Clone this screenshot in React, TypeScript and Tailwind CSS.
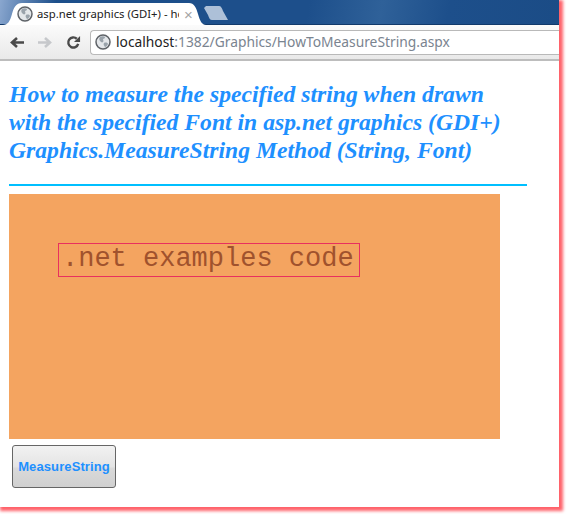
const Globe = ({ size }: { size: number }) => (
  <svg width={size} height={size} viewBox="0 0 16 16" className="shrink-0">
    <circle cx="8" cy="8" r="7" fill="#e4e7ea" stroke="#5f6368" strokeWidth="1.5" />
    <path d="M5 3c2-1 4-1 5 0 0 1-1 2-2 2 0 1 1 2 0 3-1 1-2 0-3-1-1-1-1-3 0-4zM9 9c2-1 4 0 4 1-1 2-2 3-3 3-1-1-2-3-1-4z" fill="#9aa3ab" />
  </svg>
)

export default function App() {
  return (
    <div className="w-[568px] h-[514px] bg-white overflow-hidden font-['Liberation_Sans',sans-serif]">
      <div className="w-[559px] h-[507px] bg-white shadow-[2px_2px_3px_2px_#ff626a] flex flex-col">
        {/* title bar with tab */}
        <div className="h-[25px] shrink-0 bg-[linear-gradient(100deg,#8aa7cf_0%,#1d4f8b_10%,#1d4f8b_55%,#2f6199_68%,#1d4f8b_80%,#1b4c86_100%)] flex items-end border-b border-[#123a6b]">
          <div className="ml-[3px] w-[203px] h-[22px] bg-white [clip-path:path('M0_22C5_22_7_18_9_11C11_4_13_0_19_0H186C191_0_193_4_195_11C197_18_199_22_203_22Z')] flex items-center pl-[14px] gap-[4px] relative z-10 mb-[-1px]">
            <Globe size={16} />
            <span className="w-[142px] font-['Noto_Sans',sans-serif] text-[11.300px] text-[#222] whitespace-nowrap overflow-hidden">asp.net graphics (GDI+) - ho</span>
            <span className="ml-[1px] text-[15px] leading-none text-[#a5a5a5]">×</span>
          </div>
          <div className="ml-[-2px] mb-[4px] w-[24px] h-[14px] bg-[#adc0d8] [clip-path:path('M2_0H15C17_0_18_2_19_5L24_14H8C6_14_5_12_4_9L0_2Z')]" />
        </div>
        {/* toolbar */}
        <div className="h-[36px] shrink-0 bg-gradient-to-b from-[#fbfbfb] to-[#e9e9e9] border-b-2 border-[#bdbdbd] flex items-center pl-[10px]">
          <svg width="14" height="11" viewBox="0 0 14 11">
            <path d="M14 5.500H3M7 1 2 5.500l5 4.500" fill="none" stroke="#4a4a4a" strokeWidth="2.600" />
          </svg>
          <svg width="14" height="11" viewBox="0 0 14 11" className="ml-[14px]">
            <path d="M0 5.500h11M7 1l5 4.500-5 4.500" fill="none" stroke="#c6c8cb" strokeWidth="2.600" />
          </svg>
          <svg width="15" height="15" viewBox="0 0 16 16" className="ml-[14px]">
            <path d="M13 9.500A5.400 5.400 0 1 1 11.500 4" fill="none" stroke="#4a4a4a" strokeWidth="2.600" />
            <path d="M15 1v6.500H8.500z" fill="#4a4a4a" />
          </svg>
          <div className="ml-[9px] flex-1 h-[25px] bg-white border border-r-0 border-[#b9b9b9] rounded-l-[4px] flex items-center pl-[4px] gap-[5px]">
            <Globe size={16} />
            <span className="font-['Noto_Sans',sans-serif] text-[13.800px] text-[#7a8490] whitespace-nowrap"><span className="text-[#222]">localhost</span>:1382/Graphics/HowToMeasureString.aspx</span>
          </div>
        </div>
        {/* page */}
        <div className="flex-1 pl-[9px] pt-[19px]">
          <h1 className="font-['Liberation_Serif',serif] font-bold italic text-[23.650px] leading-[28px] text-[#1e90ff] whitespace-nowrap">
            How to measure the specified string when drawn
            <br />
            with the specified Font in asp.net graphics (GDI+)
            <br />
            Graphics.MeasureString Method (String, Font)
          </h1>
          <div className="mt-[20px] w-[518px] h-[2px] bg-[#00bfff]" />
          <div className="mt-[8px] w-[491px] h-[245px] bg-[#f4a460] pt-[49px] pl-[49px]">
            <div className="w-[302px] h-[34px] border border-[#e8305f] flex items-center pl-[3px] pb-[1px]">
              <span className="font-['Liberation_Mono',monospace] text-[27px] leading-none text-[#a0522d] whitespace-nowrap">.net examples code</span>
            </div>
          </div>
          <button className="mt-[6px] ml-[3px] block w-[104px] h-[43px] rounded-[3px] border border-[#666] bg-[linear-gradient(#f2f2f2,#e4e4e4_50%,#d9d9d9_55%,#d0d0d0)] text-[13px] tracking-[0.1px] font-bold text-[#1e90ff]">
            MeasureString
          </button>
        </div>
      </div>
    </div>
  )
}
